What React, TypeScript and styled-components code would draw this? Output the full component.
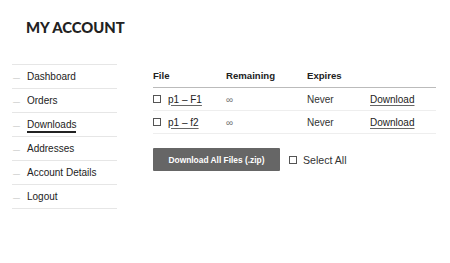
import React from 'react';
import styled, { createGlobalStyle } from 'styled-components';

const GlobalStyle = createGlobalStyle`
	html, body {
		margin: 0;
		padding: 0;
		background: #fff;
	}
	body {
		font-family: 'Liberation Sans', Arial, sans-serif;
		color: #333;
	}
`;

const navItems = ['Dashboard', 'Orders', 'Downloads', 'Addresses', 'Account Details', 'Logout'];
const downloads = [
	{ file: 'p1 – F1', remaining: '∞', expires: 'Never' },
	{ file: 'p1 – f2', remaining: '∞', expires: 'Never' },
];

function App() {
	return (
		<Page>
			<GlobalStyle />
			<Title>MY ACCOUNT</Title>
			<Columns>
				<Nav>
					{navItems.map((item) => (
						<NavItem key={item}>
							<Dash>—</Dash>
							<NavLink $active={item === 'Downloads'}>{item}</NavLink>
						</NavItem>
					))}
				</Nav>
				<Content>
					<Table>
						<thead>
							<tr>
								<Th $w={73}>File</Th>
								<Th $w={81}>Remaining</Th>
								<Th $w={63}>Expires</Th>
								<Th $w={66}></Th>
							</tr>
						</thead>
						<tbody>
							{downloads.map((d) => (
								<tr key={d.file}>
									<Td>
										<FileCell>
											<Box />
											<FileLink>{d.file}</FileLink>
										</FileCell>
									</Td>
									<Td $muted>{d.remaining}</Td>
									<Td>{d.expires}</Td>
									<Td>
										<FileLink>Download</FileLink>
									</Td>
								</tr>
							))}
						</tbody>
					</Table>
					<Actions>
						<ZipButton>Download All Files (.zip)</ZipButton>
						<SelectAll>
							<Box />
							Select All
						</SelectAll>
					</Actions>
				</Content>
			</Columns>
		</Page>
	);
}

export default App;

const Page = styled.div`
	width: 450px;
	height: 263px;
	padding: 18px 12px 0;
	box-sizing: border-box;
`;

const Title = styled.h1`
	margin: 0 0 0 14px;
	font-family: Lato, 'Open Sans', sans-serif;
	font-weight: 900;
	font-size: 14.8px;
	line-height: 18px;
	color: #222;
	letter-spacing: 0;
`;

const Columns = styled.div`
	display: flex;
	gap: 36px;
	margin-top: 28px;
`;

const Nav = styled.ul`
	list-style: none;
	margin: 0;
	padding: 0;
	width: 105px;
	border-top: 1px solid #e6e6e6;
`;

const NavItem = styled.li`
	display: flex;
	align-items: center;
	height: 24px;
	padding-top: 1px;
	box-sizing: border-box;
	border-bottom: 1px solid #e6e6e6;
	font-size: 10px;
	color: #222;
`;

const Dash = styled.span`
	width: 14px;
	padding-left: 1px;
	font-size: 7px;
	color: #bbb;
`;

const NavLink = styled.span<{ $active?: boolean }>`
	padding-bottom: 1px;
	border-bottom: 2px solid ${(p) => (p.$active ? '#222' : 'transparent')};
	margin-top: 2px;
`;

const Content = styled.div`
	width: 283px;
	padding-top: 6px;
`;

const Table = styled.table`
	width: 283px;
	border-collapse: collapse;
	font-size: 10px;
	color: #333;
`;

const Th = styled.th<{ $w: number }>`
	width: ${(p) => p.$w}px;
	text-align: left;
	font-weight: 800;
	font-size: 9.6px;
	color: #222;
	padding: 0 0 6px;
	border-bottom: 1px solid #bbb;
	font-family: 'Liberation Sans', sans-serif;
`;

const Td = styled.td<{ $muted?: boolean }>`
	height: 22px;
	padding: 0;
	border-bottom: 1px solid #eee;
	color: ${(p) => (p.$muted ? '#777' : '#333')};
	font-size: 10px;
`;

const FileCell = styled.span`
	display: flex;
	align-items: center;
	gap: 7px;
`;

const Box = styled.span`
	display: inline-block;
	width: 6px;
	height: 6px;
	border: 1px solid #555;
	background: #fff;
`;

const FileLink = styled.span`
	color: #222;
	text-decoration: underline;
	text-underline-offset: 2px;
	text-decoration-color: #666;
`;

const Actions = styled.div`
	display: flex;
	align-items: center;
	gap: 9px;
	margin-top: 14px;
`;

const ZipButton = styled.button`
	width: 127px;
	height: 23px;
	border: none;
	border-radius: 1px;
	background: #666;
	color: #fff;
	font-family: 'Liberation Sans', sans-serif;
	font-weight: 700;
	font-size: 8.4px;
	padding: 0;
`;

const SelectAll = styled.label`
	display: flex;
	align-items: center;
	gap: 6px;
	font-size: 10.6px;
	color: #333;
`;
